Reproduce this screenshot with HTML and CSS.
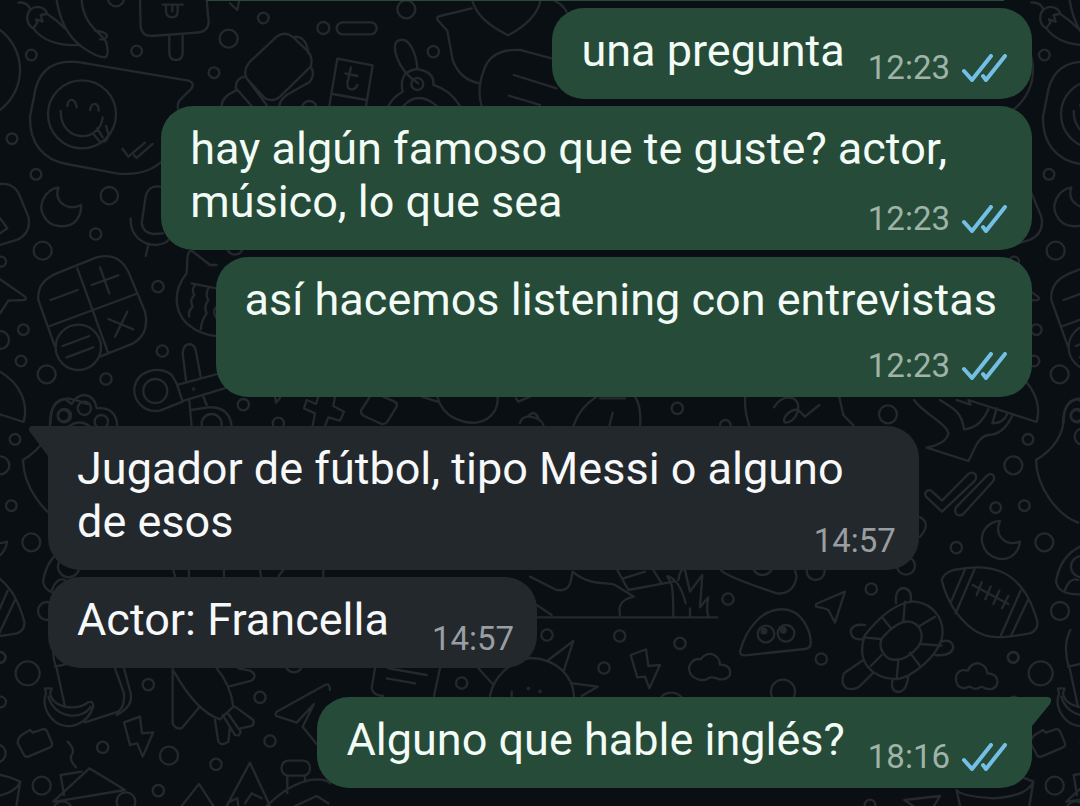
FILE: index.html
```html
<!DOCTYPE html>
<html lang="es">
<head>
<meta charset="utf-8">
<meta name="viewport" content="width=device-width, initial-scale=1">
<title>Chat</title>
<link rel="stylesheet" href="styles.css">
</head>
<body>
<svg class="wallpaper" aria-hidden="true">
  <defs>
    <g id="doodles">
      <g transform="scale(.3333)">
        <path d="M55 8C75 5 85 15 92 28C110 15 135 20 142 42C170 60 185 75 195 85M92 28C75 45 80 75 100 85C130 125 180 138 240 135M100 85L112 68L108 58L128 65L122 45L140 42"/>
        <path d="M170 0C180 60 200 105 245 140C275 162 300 172 315 172C325 168 325 150 318 125C300 95 250 75 245 0M285 92C300 92 325 100 320 110Q315 120 300 118"/>
        <circle cx="94" cy="165" r="16"/><circle cx="348" cy="-5" r="24"/><circle cx="410" cy="153" r="16"/><circle cx="790" cy="54" r="16"/><circle cx="686" cy="116" r="27"/><circle cx="642" cy="218" r="16"/><circle cx="36" cy="416" r="16"/><circle cx="108" cy="523" r="16"/><circle cx="328" cy="587" r="26"/>
        <path d="M420 0L422 80Q425 108 455 108L590 98Q625 95 626 65L620 0M508 108V158Q508 180 528 180Q548 180 548 158V104M488 14H548M498 14V35Q500 52 517 52Q532 52 533 35V14M517 14V34M690 10L712 30L718 0"/>
        <path d="M0 90C80 150 80 270 0 330"/>
        <path d="M535 330Q530 312 540 300L575 265Q585 248 565 242L240 187L215 185C140 185 110 230 102 290L90 350C88 430 130 480 200 492L350 520C420 528 460 510 490 480"/>
        <circle cx="246" cy="343" r="102"/>
        <path d="M202 318C205 293 225 293 230 322M270 330C275 305 295 305 296 332M182 333C182 430 300 430 308 352M278 400L300 425Q320 430 326 405L318 378M292 385L308 412"/>
        <path d="M368 447L385 470L435 428M402 466L410 474L458 432"/>
        <path d="M750 185L830 110Q855 92 880 112L925 155Q940 175 932 200L840 290Q820 308 795 295L740 235Q728 210 750 185ZM735 230Q705 235 708 265L755 318M740 235L800 315M885 110Q920 110 925 160M935 205Q945 225 930 245L860 285Q840 300 838 318M708 272Q665 290 665 318"/>
        <path d="M0 552Q45 548 60 590L85 650Q95 700 50 720L0 735M0 655L22 685L0 700"/>
        <path d="M175 562C130 570 115 620 130 645C150 690 210 685 230 660Q245 640 243 615C210 635 160 610 175 562Z"/>
        <path d="M480 560Q445 555 437 590L425 670Q430 700 460 702L490 700M392 655C390 710 430 735 470 735Q500 730 505 720M445 735L437 768"/>
      </g>
      <g transform="translate(270 0) scale(.3333)">
        <circle cx="160" cy="84" r="18"/><circle cx="409" cy="28" r="27"/><circle cx="490" cy="155" r="17"/><circle cx="442" cy="252" r="18"/><circle cx="118" cy="325" r="22"/>
        <rect x="200" y="67" width="120" height="36" rx="18"/>
        <path d="M178 318L202 176L308 196L288 318M188 282L290 300M243 202L232 250Q232 270 248 268Q260 265 262 255M226 220L262 228"/>
        <path d="M445 250C380 210 360 130 385 122C420 105 440 170 442 205M355 318Q370 290 398 275Q385 215 440 207Q495 215 490 255Q540 270 570 318M400 318Q445 270 500 318"/>
        <path d="M605 25L510 48Q495 52 505 62L532 92L548 180Q570 240 630 250M607 0Q620 60 715 106Q800 60 812 0M850 0Q880 15 890 35"/>
        <path d="M845 175L750 150Q660 145 640 215Q620 270 635 318M732 225L860 265M716 287L810 315"/>
      </g>
      <g transform="translate(0 200) scale(.3333)">
        <circle cx="287" cy="102" r="17"/><circle cx="128" cy="152" r="27"/><circle cx="3" cy="185" r="15"/><circle cx="474" cy="260" r="17"/><circle cx="0" cy="420" r="27"/><circle cx="70" cy="389" r="16"/><circle cx="63" cy="483" r="16"/><circle cx="140" cy="523" r="27"/><circle cx="487" cy="453" r="17"/><circle cx="318" cy="537" r="17"/><circle cx="705" cy="140" r="24"/>
        <path d="M300 470L400 430Q450 400 435 335L385 215Q355 155 290 172L170 220Q110 245 115 300L165 440M232 205L325 460M150 378L408 282M152 300L233 270M275 255L355 226M300 202L328 280M325 357L400 388M382 335L345 410M188 438L268 408M200 472L280 442"/>
        <circle cx="235" cy="442" r="68"/>
        <path d="M0 238L75 290Q82 298 72 300L25 302L0 340"/>
        <path d="M650 195H630L575 152Q562 155 562 180L560 220C520 270 520 330 560 370Q600 405 650 408M575 250L650 265M585 255q-12 15-2 30q-15 15-5 35q-15 15-10 30M625 265q-10 20 0 35q-15 20-5 40q-15 20-18 48M650 320q-15 15 0 35"/>
        <path d="M548 605L480 632C430 640 400 600 403 565C410 510 480 495 515 525L530 550ZM532 555L690 512M550 603L690 560M558 540L548 460Q550 432 570 432Q585 435 588 455L602 530M568 602L575 680M610 590L620 615M572 630L625 622Q690 620 695 680"/>
        <circle cx="466" cy="573" r="36"/><circle cx="581" cy="567" r="2"/><circle cx="635" cy="672" r="30"/>
        <path d="M150 675Q150 600 195 597L215 612Q230 585 255 585Q285 590 290 625Q350 620 352 680M205 680Q240 655 270 680"/>
        <circle cx="193" cy="647" r="20"/><circle cx="253" cy="625" r="20"/><circle cx="304" cy="665" r="20"/>
      </g>
      <g transform="translate(200 390) scale(.3333)">
        <circle cx="130" cy="44" r="17"/><circle cx="235" cy="100" r="17"/>
        <path d="M355 20L348 42L320 30L312 55L345 70L338 108M405 20L400 48L432 65L420 92L385 82L375 108M510 20L484 60Q480 70 492 78L545 102Q556 104 562 95L590 50Q594 40 582 34L550 20M225 20L228 38L240 24M665 20L712 35M712 20C730 90 800 100 830 98C880 90 895 50 893 20M948 25L955 35L990 20M960 100Q965 78 990 80Q1025 85 1030 105M985 78Q1000 58 1015 82M1120 108Q1140 50 1190 20"/>
      </g>
      <g transform="translate(600 390) scale(.3333)">
        <circle cx="232" cy="55" r="17"/><circle cx="376" cy="106" r="16"/><circle cx="864" cy="73" r="27"/>
        <path d="M0 25H75M105 20Q125 50 120 108M38 68L28 108M436 20Q432 60 448 108M522 52Q545 15 580 25C610 40 590 100 555 98C545 85 570 55 595 60L615 80L658 45M718 20L730 75L762 108"/>
      </g>
      <g transform="translate(900 400) scale(.3333)">
        <path d="M42 0C70 40 140 70 145 100Q140 130 80 143L205 183C220 160 230 110 265 105Q310 105 338 45M120 0C150 20 185 30 192 88Q240 85 265 28M170 0L212 14L205 0L410 66C425 10 400 -50 339 -85M290 25L277 70Q310 70 322 42"/>
        <path d="M600 12Q570 0 545 -5Q495 0 492 50Q490 130 408 180C410 260 470 345 535 368"/>
        <circle cx="530" cy="47" r="17"/><circle cx="548" cy="110" r="24"/>
        <circle cx="384" cy="118" r="16"/><circle cx="340" cy="196" r="27"/><circle cx="287" cy="323" r="16"/><circle cx="373" cy="317" r="16"/><circle cx="169" cy="443" r="17"/><circle cx="433" cy="427" r="27"/><circle cx="480" cy="633" r="27"/><circle cx="340" cy="772" r="16"/><circle cx="422" cy="820" r="36"/>
        <path d="M96 274L126 302L205 222Q215 214 225 222Q232 232 225 242L126 335L78 290Q72 278 82 272Q90 268 96 274ZM168 322L262 226Q272 218 280 226Q286 236 278 245L190 342Q180 350 170 343Q162 335 168 322Z"/>
        <path d="M300 363C260 365 240 400 247 430C260 480 320 490 345 460Q358 445 360 425C320 440 280 410 300 363Z"/>
        <path d="M125 540Q130 520 160 510C280 485 340 520 380 585Q400 620 412 665Q415 690 390 700C310 715 260 720 215 685C170 650 140 600 125 540ZM195 508L152 608M225 505L167 640M362 572L302 708M384 600L333 708M218 555L325 612M245 547L230 585M272 560L256 598M298 572L280 612M325 588L306 625"/>
        <path d="M190 865Q165 860 168 830Q175 805 203 812Q215 788 235 790Q260 795 262 820Q295 822 292 850Q285 872 258 866Q245 858 240 862Q225 872 210 860Z"/>
        <path d="M540 440Q480 470 468 545Q475 585 540 583M495 570Q510 530 535 540M60 352Q95 370 60 410"/>
        <circle cx="545" cy="500" r="32"/>
      </g>
      <g transform="translate(530 560) scale(.3333)">
        <path d="M1005 225Q1080 130 1150 124C1220 130 1245 190 1236 235C1220 290 1150 350 1100 358C1030 355 975 310 1005 225ZM1060 230Q1100 185 1135 184C1175 190 1185 230 1165 260C1130 300 1100 305 1075 295C1050 275 1045 250 1060 230ZM1000 232L1052 237M1055 170L1085 207M1125 125L1120 185M1165 200L1215 170M1172 252L1235 257M1140 278L1168 315M1105 302L1100 358M1055 285L1022 318M1098 130Q1095 85 1122 84Q1148 90 1142 124M1005 195Q965 190 962 215Q965 240 995 238M1000 300L942 340Q930 370 950 385Q975 392 990 378L1028 340M1088 358Q1080 392 1105 396Q1130 395 1135 348M1234 245Q1265 235 1270 262Q1265 290 1215 285"/>
        <path d="M0 50L75 88Q115 100 123 60L128 35C180 80 230 65 255 75L312 110Q260 120 270 165M262 30L295 90L430 65M370 30L395 70M280 55L345 35M20 172H562M430 170Q430 100 425 75L412 48Q450 60 467 130M445 60Q450 30 460 28M465 30L480 95L517 45L510 142L535 112Q528 150 535 168M480 145V168M20 135L65 165"/>
        <circle cx="594" cy="117" r="17"/><circle cx="51" cy="225" r="17"/><circle cx="269" cy="228" r="17"/><circle cx="222" cy="324" r="17"/><circle cx="450" cy="250" r="17"/><circle cx="874" cy="297" r="17"/><circle cx="1024" cy="87" r="17"/><circle cx="857" cy="33" r="27"/><circle cx="1128" cy="17" r="27"/><circle cx="698" cy="15" r="30"/><circle cx="759" cy="395" r="36"/><circle cx="424" cy="440" r="42"/>
        <path d="M572 30Q590 50 740 100Q790 105 800 50L795 30M858 132L945 95L915 188L895 150Q880 142 858 140Z"/>
        <path d="M630 275C650 200 700 145 760 148C820 150 845 220 842 255Q838 265 825 267L645 286Q630 286 630 275Z"/>
        <circle cx="708" cy="222" r="25"/><circle cx="768" cy="220" r="25"/><circle class="dot" cx="702" cy="213" r="7"/><circle class="dot" cx="760" cy="211" r="7"/>
        <path d="M302 285L348 268L355 318L390 315L358 385L345 350L322 352Z"/>
        <path d="M505 358Q475 350 477 320Q490 292 512 298Q525 280 545 282Q570 290 570 314Q605 315 600 345Q585 365 560 355Q540 348 530 358Q515 362 505 358Z"/>
        <path d="M-120 408C-110 350 -60 305 0 294C80 295 130 350 132 410M55 300L130 243L102 330M128 370L203 380L155 408M-155 325L-112 372M-55 395V408"/>
        <circle class="dot" cx="-5" cy="386" r="2"/><circle class="dot" cx="30" cy="394" r="2"/>
      </g>
      <g transform="translate(330 660) scale(.3333)">
        <circle cx="395" cy="69" r="17"/>
        <path d="M135 25L125 85Q130 108 160 108M330 25L312 108M175 25L290 45M170 55L255 70"/>
      </g>
      <g transform="translate(0 560) scale(.3333)">
        <circle cx="0" cy="292" r="16"/><circle cx="2" cy="426" r="16"/><circle cx="445" cy="374" r="17"/><circle cx="780" cy="412" r="17"/><circle cx="308" cy="562" r="17"/><circle cx="507" cy="587" r="27"/><circle cx="810" cy="543" r="17"/><circle cx="648" cy="613" r="17"/><circle cx="125" cy="677" r="27"/><circle cx="475" cy="692" r="17"/><circle cx="-10" cy="580" r="27"/><circle cx="882" cy="310" r="27"/>
        <path d="M160 280Q160 300 170 325L195 440M165 320L210 310M345 325L372 400Q375 440 355 455L255 487M372 325L392 400Q400 440 350 465M160 280Q155 245 172 210"/>
        <path d="M135 385H155L150 400C160 450 240 450 262 428Q280 420 280 440C260 500 200 510 165 485C130 455 130 420 138 400ZM145 410C165 480 250 480 272 440"/>
        <path d="M518 325V490Q525 508 545 505L598 442M522 335C570 420 620 465 660 478L700 440C695 400 680 360 650 325M685 380L755 362Q775 345 750 332L715 325M645 480L655 545Q665 560 685 545L690 500M668 465L705 525Q720 530 722 515L685 462M705 440L760 480Q765 500 745 500L722 505"/>
        <path d="M372 487L420 470L426 520L460 517L428 590L412 550L390 555ZM990 390Q990 368 975 375L830 455Q822 468 835 470L890 488L942 432L908 500L950 552"/>
        <path d="M65 525L90 510L98 518L130 507Q140 508 143 518L156 550Q158 558 150 562L85 590Q75 592 72 585L53 550Q53 535 65 525ZM203 545q20 20 15 35q-15 15 10 42"/>
        <path d="M245 635L182 645L192 705M160 725L268 625L375 690L165 725M545 738L597 672L640 738M680 738L750 608L810 738M690 725L712 715L715 738M735 730L755 700L785 715M862 648V700M915 648V665M800 738Q880 660 950 658Q980 658 990 670M885 738L950 708L985 730"/>
        <circle cx="378" cy="725" r="28"/><circle cx="188" cy="752" r="28"/>
        <rect x="845" y="602" width="85" height="45" rx="20"/>
        <path d="M520 30L525 48M567 30V48M672 30V48M780 30L783 48M850 30L836 48M970 30V48"/>
      </g>
      <g transform="translate(860 690) scale(.3333)">
        <path d="M133 330L240 318L222 348M133 330L160 348M290 300Q300 318 400 325Q500 320 520 275Q480 255 430 250M290 300L300 348M520 275L508 348"/>
        <circle cx="30" cy="345" r="16"/>
      </g>
    </g>
    <symbol id="ticks" viewBox="0 0 46 28">
      <path d="M3 17L11 26L30 2M22 22L25 26L44 2"/>
    </symbol>
  </defs>
  <use href="#doodles" x="-1013"/>
  <use href="#doodles"/>
  <use href="#doodles" x="1013"/>
</svg>

<main class="chat">
  <div class="previous"></div>
  <section class="group sent">
    <article class="bubble">
      <p class="text">una pregunta</p>
      <span class="meta"><time>12:23</time><svg class="ticks" role="img" aria-label="Leído"><use href="#ticks"/></svg></span>
    </article>
    <article class="bubble wrapped">
      <p class="text">hay algún famoso que te guste? actor, músico, lo que sea <span class="meta"><time>12:23</time><svg class="ticks" role="img" aria-label="Leído"><use href="#ticks"/></svg></span></p>
    </article>
    <article class="bubble stacked">
      <p class="text">así hacemos listening con entrevistas</p>
      <span class="meta"><time>12:23</time><svg class="ticks" role="img" aria-label="Leído"><use href="#ticks"/></svg></span>
    </article>
  </section>
  <section class="group received">
    <article class="bubble wrapped">
      <svg class="tail" viewBox="0 0 50 32" aria-hidden="true"><path d="M50 0H4Q-1 1 2 6L20 30V32H50Z"/></svg>
      <p class="text">Jugador de fútbol, tipo Messi o alguno de esos <span class="meta"><time>14:57</time></span></p>
    </article>
    <article class="bubble">
      <p class="text">Actor: Francella</p>
      <span class="meta"><time>14:57</time></span>
    </article>
  </section>
  <section class="group sent">
    <article class="bubble">
      <svg class="tail" viewBox="0 0 50 32" aria-hidden="true"><path d="M0 0H46Q51 1 48 7L30 29V32H0Z"/></svg>
      <p class="text">Alguno que hable inglés?</p>
      <span class="meta"><time>18:16</time><svg class="ticks" role="img" aria-label="Leído"><use href="#ticks"/></svg></span>
    </article>
  </section>
</main>
</body>
</html>
```
FILE: styles.css
```css
* {
  box-sizing: border-box;
}

body {
  margin: 0;
  min-height: 100vh;
  position: relative;
  overflow-x: hidden;
  background: #0a0f13;
  font-family: Roboto, "Noto Sans", sans-serif;
}

.wallpaper {
  position: absolute;
  inset: 0;
  width: 100%;
  height: 100%;
  fill: none;
  stroke: #25292e;
  stroke-width: 7;
  stroke-linecap: round;
  stroke-linejoin: round;
}

.wallpaper .dot {
  fill: #25292e;
}

.chat {
  position: relative;
  display: flex;
  flex-direction: column;
  gap: 29px;
  padding: 0 48px 17px;
}

.previous {
  align-self: flex-end;
  width: 81%;
  height: 1px;
  margin: 0 28px -22px 0;
  background: #264b39;
}

.group {
  display: flex;
  flex-direction: column;
  align-items: flex-start;
  gap: 7px;
}

.sent {
  --bubble: #264b39;
  --time: #9fb3a8;
  --ink: #f2fbf5;
  align-items: flex-end;
}

.received {
  --bubble: #23282c;
  --time: #999ea2;
  --ink: #f7f8fa;
}

.bubble {
  position: relative;
  display: flex;
  align-items: flex-end;
  gap: 23px;
  max-width: 88.5%;
  padding: 16px 25px 11px 29px;
  border-radius: 32px;
  background: var(--bubble);
  color: var(--ink);
}

.received .bubble {
  gap: 43px;
  padding-right: 23px;
  padding-bottom: 9px;
}

.text {
  position: relative;
  margin: 0;
  padding-bottom: 11px;
  font-size: 45px;
  line-height: 53px;
}

.received .text {
  padding-bottom: 13px;
}

.meta {
  display: flex;
  align-items: center;
  gap: 11px;
  height: 40px;
  color: var(--time);
  font-size: 33px;
  line-height: 40px;
}

.ticks {
  width: 46px;
  height: 28px;
  fill: none;
  stroke: #74bfe5;
  stroke-width: 4;
  stroke-linecap: round;
  stroke-linejoin: round;
}

/* The time shares the last line of a long message. */
.bubble.wrapped {
  display: block;
}

.wrapped .meta {
  float: right;
  margin-top: 24px;
}

.received .wrapped .meta {
  margin-top: 26px;
}

/* The time gets a line of its own. */
.bubble.stacked {
  flex-direction: column;
  gap: 0;
}

.stacked .text {
  padding: 0 10px 20px 0;
}

.tail {
  position: absolute;
  top: 0;
  width: 50px;
  height: 32px;
  fill: var(--bubble);
}

.sent .tail {
  right: -20px;
}

.received .tail {
  left: -20px;
}
```
